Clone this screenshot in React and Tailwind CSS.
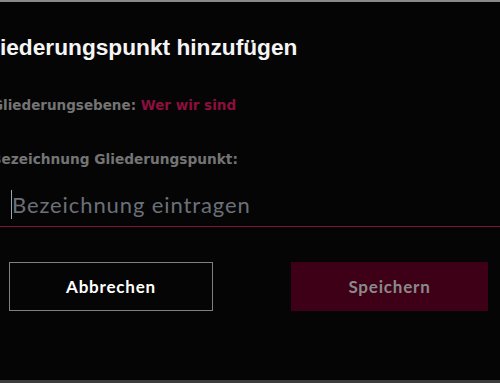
export default function App() {
  return (
    <div className="w-[500px] h-[383px] bg-[#050505] border-t-2 border-[#8a8a8a] flex flex-col overflow-hidden">
      <h1 className="mt-[31px] ml-[-24px] whitespace-nowrap text-[22.7px] leading-[28px] font-bold text-[#f5f5f5] [font-family:'Liberation_Sans',Arial,sans-serif]">
        Gliederungspunkt hinzufügen
      </h1>
      <p className="mt-[34px] ml-[-8px] whitespace-nowrap text-[13.5px] leading-[20px] font-bold text-[#747474] [font-family:'DejaVu_Sans',sans-serif]">
        Gliederungsebene: <span className="text-[#8c0f3d]">Wer wir sind</span>
      </p>
      <p className="mt-[34px] ml-[-9px] whitespace-nowrap text-[13.7px] leading-[20px] font-bold text-[#747474] [font-family:'DejaVu_Sans',sans-serif]">
        Bezeichnung Gliederungspunkt:
      </p>
      <div className="relative mt-[20px]">
        <input
          type="text"
          placeholder="Bezeichnung eintragen"
          className="block w-full h-[38px] pb-[7px] pl-3 bg-transparent border-b border-[#7d1535] outline-none text-[22px] tracking-[0.9px] leading-[30px] text-[#d1d5db] placeholder:text-[#6b7078] [font-family:Lato,sans-serif]"
        />
        <span className="absolute left-[11px] top-[1px] w-px h-[29px] bg-[#a0a4aa]" />
      </div>
      <div className="mt-[35px] flex pl-[9px] pr-[12px] justify-between">
        <button className="w-[204px] h-[49px] border border-[#808080] bg-transparent text-white text-[17px] tracking-[0.8px] font-bold [font-family:Lato,sans-serif]">
          Abbrechen
        </button>
        <button className="w-[197px] h-[49px] bg-[#3e0016] text-[#8a8a8a] text-[17px] tracking-[0.8px] font-bold [font-family:Lato,sans-serif]">
          Speichern
        </button>
      </div>
      <div className="flex-1" />
      <div className="h-[3px] bg-[#3c3c3c]" />
    </div>
  );
}
